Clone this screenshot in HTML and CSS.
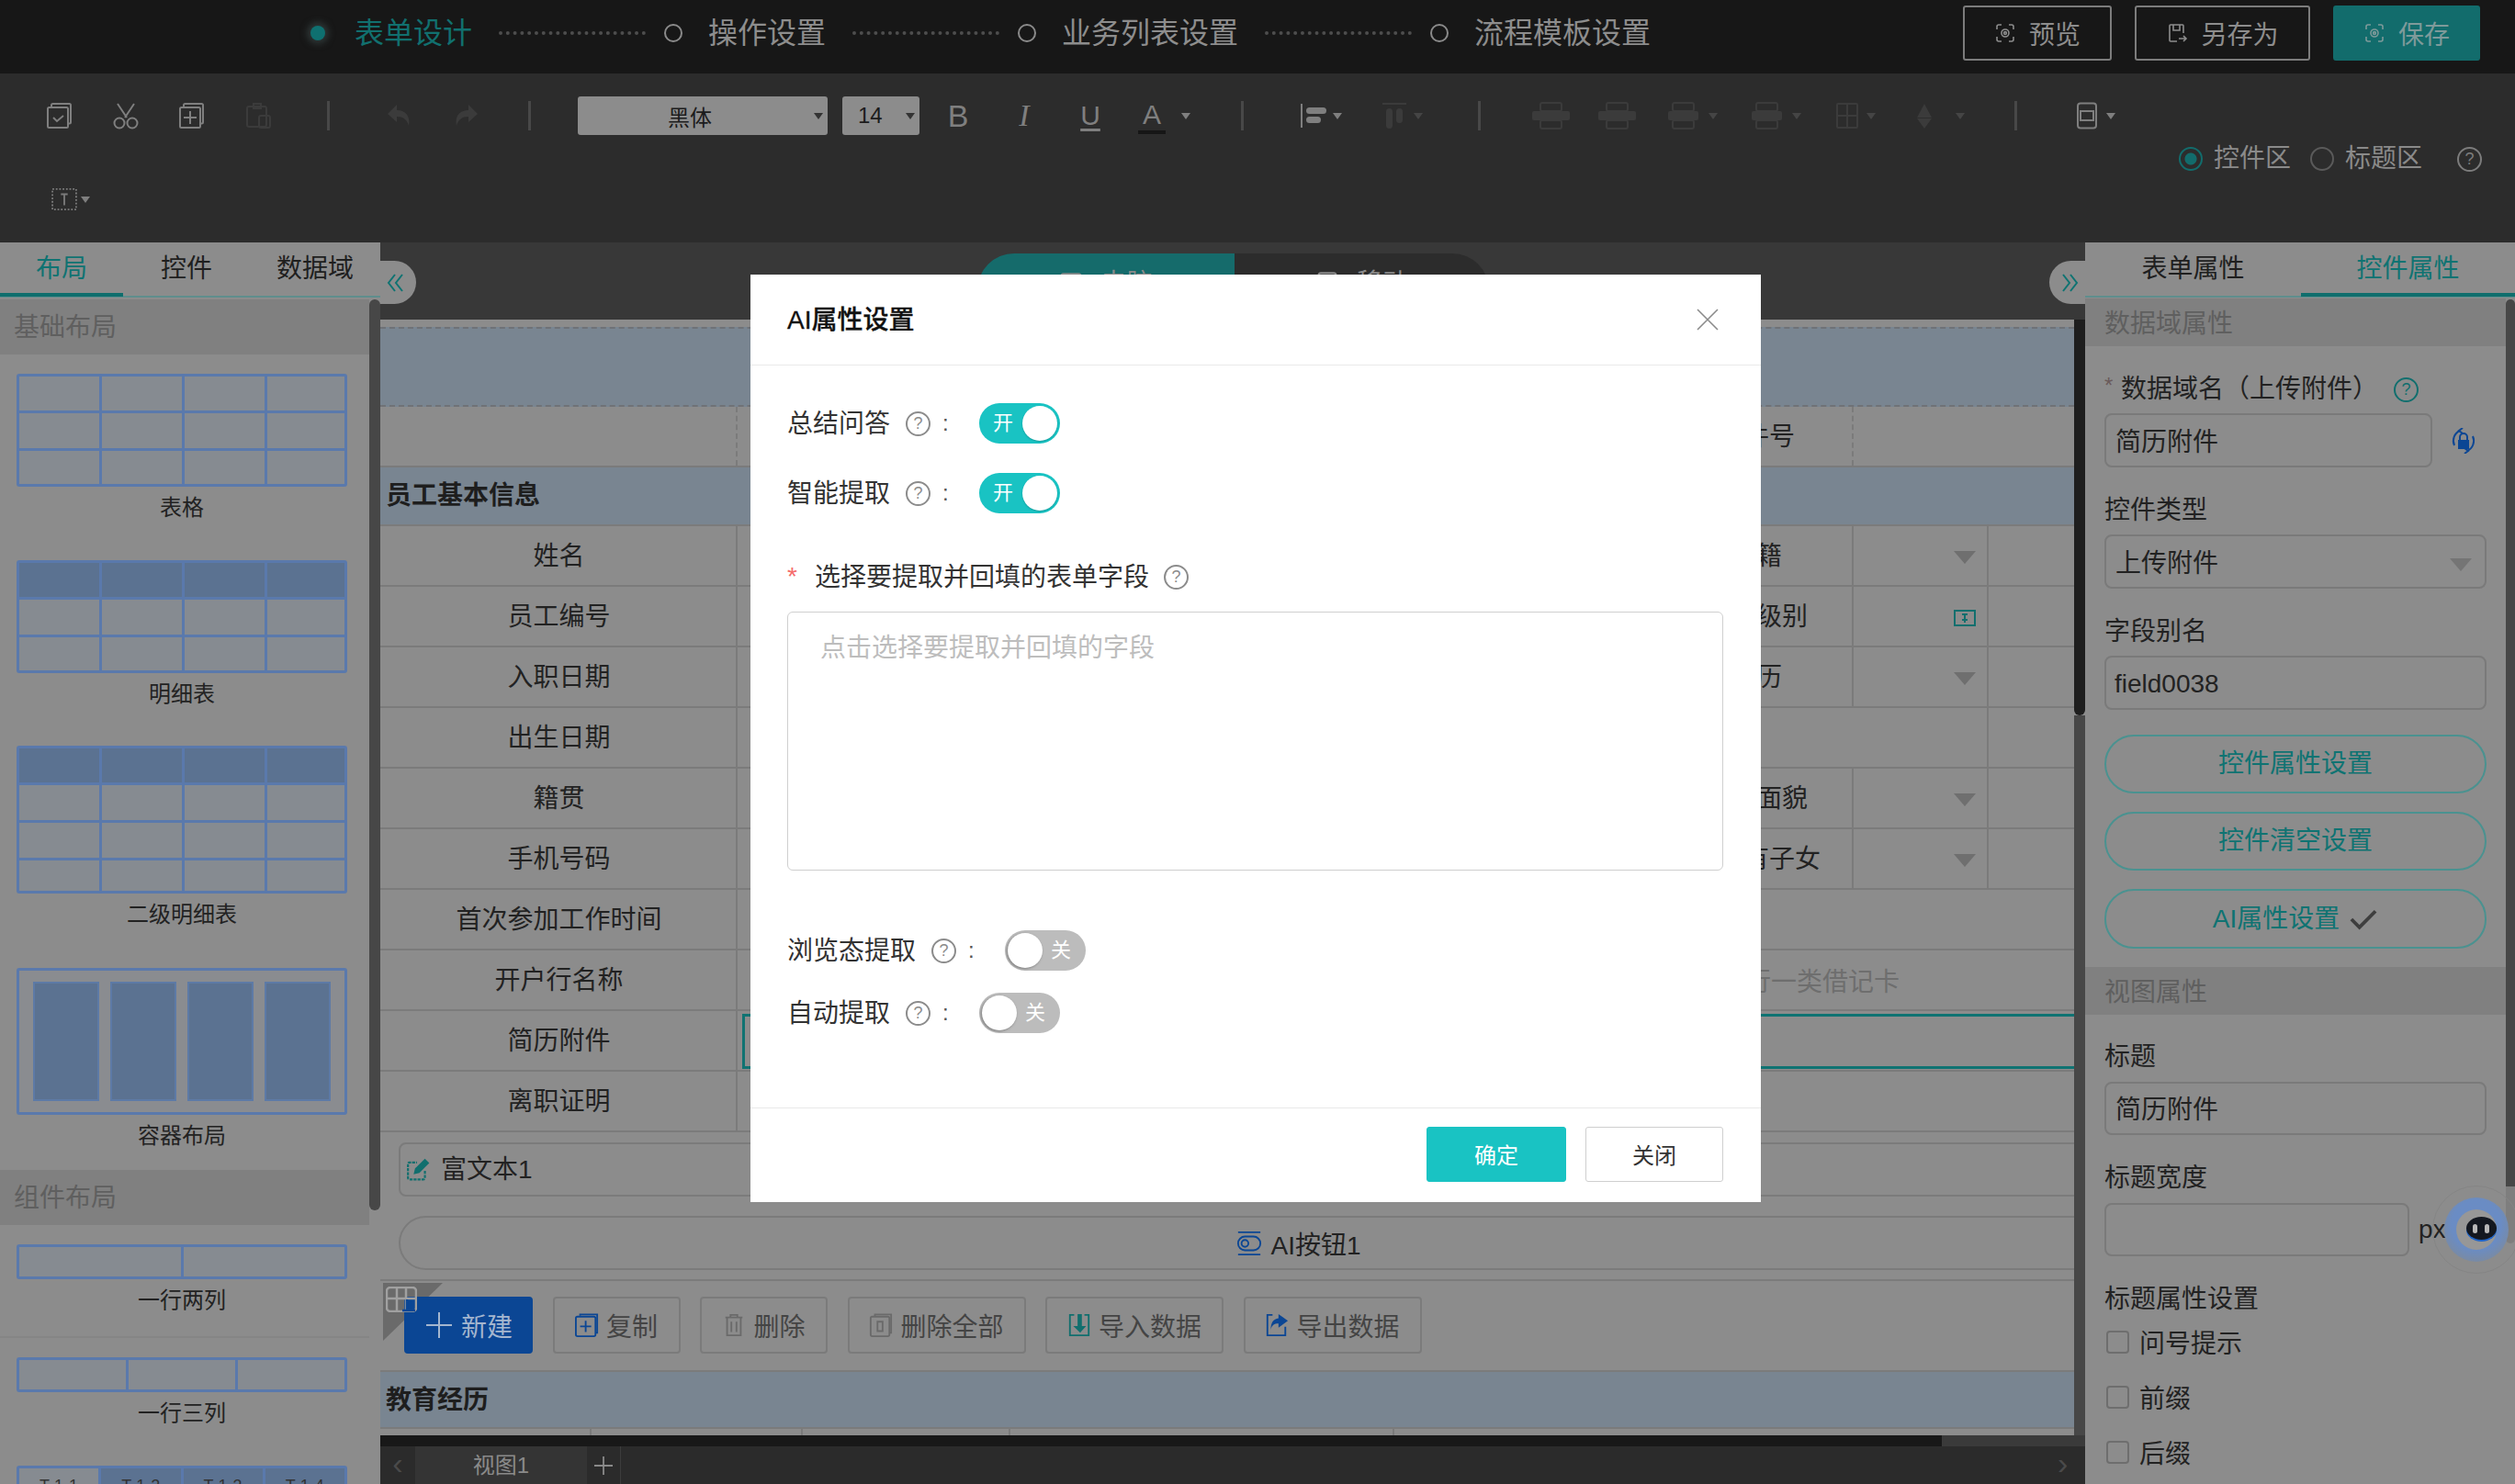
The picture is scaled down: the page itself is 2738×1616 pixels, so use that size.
FILE: index.html
```html
<!DOCTYPE html>
<html lang="zh-CN">
<head>
<meta charset="utf-8">
<title>AI属性设置</title>
<link rel="stylesheet" href="styles.css">
</head>
<body>
<div class="app">
  <header class="topbar">
    <span class="dot-active"></span><span class="step-label active">表单设计</span>
    <span class="connector"></span><span class="ring"></span><span class="step-label">操作设置</span>
    <span class="connector"></span><span class="ring"></span><span class="step-label">业务列表设置</span>
    <span class="connector"></span><span class="ring"></span><span class="step-label">流程模板设置</span>
    <div class="top-actions">
      <button class="top-btn w-preview"><svg class="ti" viewBox="0 0 24 24"><path d="M3 8V5a2 2 0 0 1 2-2h3M21 8V5a2 2 0 0 0-2-2h-3M3 16v3a2 2 0 0 0 2 2h3M21 16v3a2 2 0 0 1-2 2h-3"/><circle cx="12" cy="12" r="4"/><circle cx="12" cy="12" r="1.4"/></svg>预览</button>
      <button class="top-btn w-saveas"><svg class="ti" viewBox="0 0 24 24"><path d="M19 12V4a1 1 0 0 0-1-1H5a1 1 0 0 0-1 1v16a1 1 0 0 0 1 1h7M8 3v6h7V3M14 18h8M19 15l3 3-3 3"/></svg>另存为</button>
      <button class="top-btn save"><svg class="ti" viewBox="0 0 24 24"><path d="M3 8V5a2 2 0 0 1 2-2h3M21 8V5a2 2 0 0 0-2-2h-3M3 16v3a2 2 0 0 0 2 2h3M21 16v3a2 2 0 0 1-2 2h-3"/><circle cx="12" cy="12" r="4"/><circle cx="12" cy="12" r="1.4"/></svg>保存</button>
    </div>
  </header>

  <section class="toolbar">
    <div class="tool-row">
      <svg class="tool first" viewBox="0 0 30 30"><path d="M6 5V3.500A1.500 1.500 0 0 1 7.500 2h18A1.500 1.500 0 0 1 27 3.500V22a1.500 1.500 0 0 1-1.500 1.500H24"/><rect x="2" y="6" width="22" height="22" rx="1.500"/><path d="M8 17l4 4 7-6"/></svg>
      <svg class="tool" viewBox="0 0 30 30"><path d="M6 2l10 15M24 2L14 17"/><circle cx="8" cy="23" r="5.500"/><circle cx="22" cy="23" r="5.500"/></svg>
      <svg class="tool" viewBox="0 0 30 30"><path d="M6 5V3.500A1.500 1.500 0 0 1 7.500 2h18A1.500 1.500 0 0 1 27 3.500V22a1.500 1.500 0 0 1-1.500 1.500H24"/><rect x="2" y="6" width="22" height="22" rx="1.500"/><path d="M13 10v14M6 17h14"/></svg>
      <svg class="tool off" viewBox="0 0 30 30"><rect x="3" y="5" width="21" height="22" rx="2"/><rect x="10" y="2" width="8" height="5"/><rect x="16" y="15" width="12" height="13" rx="2"/></svg>
      <span class="sep"></span>
      <svg class="tool off fill" viewBox="0 0 30 30"><path d="M12 3L2 13l10 9v-6c7 0 11 3 13 10 2-10-3-17-13-17z"/></svg>
      <svg class="tool off fill" viewBox="0 0 30 30"><path d="M18 3l10 10-10 9v-6c-7 0-11 3-13 10C3 16 8 9 18 9z"/></svg>
      <span class="sep s-edit"></span>
      <div class="select font-select">黑体<i class="caret dark"></i></div>
      <div class="select size-select">14<i class="caret dark"></i></div>
      <span class="glyph g-bold">B</span>
      <span class="glyph g-italic">I</span>
      <span class="glyph g-under">U</span>
      <span class="glyph g-color">A</span><i class="caret mid"></i>
      <span class="sep s-text"></span>
      <svg class="tool" viewBox="0 0 30 30"><path d="M2 2v26"/><rect class="solid" x="7" y="6" width="22" height="7" rx="3.500"/><rect class="solid" x="7" y="16" width="16" height="7" rx="3.500"/></svg><i class="caret"></i>
      <svg class="tool off" viewBox="0 0 30 30"><path d="M2 2h26"/><rect class="solid" x="6" y="7" width="7" height="22" rx="3.500"/><rect class="solid" x="17" y="7" width="7" height="16" rx="3.500"/></svg><i class="caret faint"></i>
      <span class="sep"></span>
      <svg class="tool off wide" viewBox="0 0 43 32"><rect x="10" y="2" width="23" height="9" rx="2"/><rect x="10" y="21" width="23" height="9" rx="2"/><rect class="solid" x="1" y="11" width="41" height="10" rx="2"/></svg>
      <svg class="tool off wide" viewBox="0 0 43 32"><rect x="10" y="2" width="23" height="9" rx="2"/><rect x="10" y="21" width="23" height="9" rx="2"/><rect class="solid" x="1" y="11" width="41" height="10" rx="2"/></svg>
      <svg class="tool off wide" viewBox="0 0 43 32"><rect x="10" y="2" width="23" height="9" rx="2"/><rect x="10" y="21" width="23" height="9" rx="2"/><rect class="solid" x="5" y="11" width="33" height="10" rx="2"/></svg><i class="caret faint"></i>
      <svg class="tool off wide t-wide4" viewBox="0 0 43 32"><rect x="10" y="2" width="23" height="9" rx="2"/><rect x="10" y="21" width="23" height="9" rx="2"/><rect class="solid" x="5" y="11" width="33" height="10" rx="2"/></svg><i class="caret faint"></i>
      <svg class="tool off t-grid" viewBox="0 0 30 30"><rect x="4" y="2" width="22" height="26" rx="1"/><path d="M15 2v26M4 15h22"/></svg><i class="caret faint"></i>
      <svg class="tool off fill t-fill" viewBox="0 0 30 30"><path d="M13 2l8 15H5z M5 18h16l-8 11z"/></svg><i class="caret faint far"></i>
      <span class="sep s-last"></span>
      <svg class="tool" viewBox="0 0 30 30"><rect x="5" y="1.500" width="20" height="27" rx="3"/><rect x="8" y="10" width="14" height="10"/></svg><i class="caret"></i>
    </div>
    <div class="mode-row">
      <span class="radio on"></span><span class="mode-label">控件区</span>
      <span class="radio"></span><span class="mode-label">标题区</span>
      <span class="help tool-help">?</span>
    </div>
    <div class="extra-row">
      <svg class="extra-ic" viewBox="0 0 30 26"><rect x="1" y="1" width="28" height="24" stroke-dasharray="2 2"/><path d="M15 6v14M11 7h8"/></svg><i class="caret"></i>
    </div>
  </section>

  <main class="workspace">
    <aside class="left-panel">
      <nav class="tabs left-tabs">
        <span class="tab active">布局</span><span class="tab">控件</span><span class="tab">数据域</span>
      </nav>
      <div class="section-head">基础布局</div>
      <div class="widget"><div class="ic ic-table"></div><div class="widget-label">表格</div></div>
      <div class="widget w2"><div class="ic ic-table head"></div><div class="widget-label">明细表</div></div>
      <div class="widget w3"><div class="ic ic-table head tall"></div><div class="widget-label">二级明细表</div></div>
      <div class="widget w4"><div class="ic ic-box"><i></i><i></i><i></i><i></i></div><div class="widget-label">容器布局</div></div>
      <div class="section-head second">组件布局</div>
      <div class="widget w5"><div class="ic ic-cols"><i></i><i></i></div><div class="widget-label">一行两列</div></div>
      <div class="widget-rule"></div>
      <div class="widget w6"><div class="ic ic-cols"><i></i><i></i><i></i></div><div class="widget-label">一行三列</div></div>
      <div class="widget w7"><div class="ic ic-cols tiny"><i>T-1-1</i><i class="b">T-1-2</i><i class="b">T-1-3</i><i class="b">T-1-4</i></div></div>
      <div class="scroll-thumb left-thumb"></div>
    </aside>

    <div class="center">
      <button class="collapse left-collapse" aria-label="收起"><svg class="chev" viewBox="0 0 18 20"><path d="M9 1L2 10l7 9M17 1l-7 9 7 9"/></svg></button>
      <button class="collapse right-collapse" aria-label="展开"><svg class="chev" viewBox="0 0 18 20"><path d="M1 1l7 9-7 9M9 1l7 9-7 9"/></svg></button>
      <div class="view-switch">
        <div class="view-tab pc"><svg class="vt-ic" viewBox="0 0 24 24"><rect x="3" y="3" width="18" height="18" rx="2"/></svg>电脑</div>
        <div class="view-tab mobile"><svg class="vt-ic" viewBox="0 0 24 24"><rect x="4" y="2" width="16" height="20" rx="2"/></svg>移动</div>
      </div>
      <div class="canvas">
        <div class="form">
          <div class="band"></div>
          <div class="frow dashed"><div class="cl"></div><div class="cv"></div><div class="cl">证件号</div><div class="cv last"></div></div>
          <div class="group">员工基本信息</div>
          <div class="frow"><div class="cl">姓名</div><div class="cv"></div><div class="cl">国籍</div><div class="cv last"><i class="drop"></i></div></div>
          <div class="frow"><div class="cl">员工编号</div><div class="cv"></div><div class="cl">职称级别</div><div class="cv last"><svg class="mini" viewBox="0 0 24 18"><rect x="1" y="1" width="22" height="16"/><path d="M12 4v10M9 5h6M9 11h6"/></svg></div></div>
          <div class="frow"><div class="cl">入职日期</div><div class="cv"></div><div class="cl">学历</div><div class="cv last"><i class="drop"></i></div></div>
          <div class="frow"><div class="cl">出生日期</div><div class="cv"></div><div class="cl blank"></div><div class="cv last"></div></div>
          <div class="frow"><div class="cl">籍贯</div><div class="cv"></div><div class="cl">政治面貌</div><div class="cv last"><i class="drop"></i></div></div>
          <div class="frow"><div class="cl">手机号码</div><div class="cv"></div><div class="cl">是否有子女</div><div class="cv last"><i class="drop"></i></div></div>
          <div class="frow"><div class="cl">首次参加工作时间</div><div class="cv wide"></div></div>
          <div class="frow"><div class="cl">开户行名称</div><div class="cv wide hint">请填写银行一类借记卡</div></div>
          <div class="frow"><div class="cl">简历附件</div><div class="cv wide picked"></div></div>
          <div class="frow"><div class="cl">离职证明</div><div class="cv wide"></div></div>
          <div class="rich"><svg class="rich-ic" viewBox="0 0 24 24"><path d="M19 13v7a1.500 1.500 0 0 1-1.500 1.500h-14A1.500 1.500 0 0 1 2 20V6a1.500 1.500 0 0 1 1.500-1.500H11" stroke-dasharray="3 1"/><path class="pen" d="M9 15l1-4L19 2l3 3-9 9z"/></svg>富文本1</div>
          <div class="ai-btn"><svg class="ai-ic" viewBox="0 0 30 30"><path d="M2 2h26M2 28h26"/><rect x="2" y="7" width="26" height="16" rx="8"/><circle cx="10" cy="15" r="4"/></svg>AI按钮1</div>
          <div class="actions">
            <span class="corner"></span>
            <svg class="corner-ic" viewBox="0 0 34 28"><rect x="1" y="1" width="32" height="26" rx="4"/><path d="M12 1v26M22 1v26M1 13h32"/><path class="cb" d="M23 14v12M18 26h14"/></svg>
            <button class="act primary"><svg class="act-ic" viewBox="0 0 28 28"><path d="M14 0v28M0 14h28"/></svg>新建</button>
            <button class="act a-copy"><svg class="act-ic blue" viewBox="0 0 28 28"><path d="M6 3V1.500h20V23h-2"/><rect x="1" y="4" width="23" height="23" rx="2"/><path d="M12.500 9v13M6 15.500h13"/></svg>复制</button>
            <button class="act a-del"><svg class="act-ic gray" viewBox="0 0 28 28"><path d="M4 5h20M10 5V2h8v3M6 5v21h16V5M11 10v12M17 10v12"/></svg>删除</button>
            <button class="act a-wide"><svg class="act-ic gray" viewBox="0 0 28 28"><path d="M7 4V1.500h19V23h-2"/><rect x="2" y="4" width="22" height="23" rx="2"/><path d="M9 10h8M10 10v11h6V10"/></svg>删除全部</button>
            <button class="act a-wide"><svg class="act-ic teal" viewBox="0 0 28 28"><path d="M8 2H3v24h22V2h-5"/><path class="fl" d="M12 1h5v14h5l-7 8-8-8h5z"/></svg>导入数据</button>
            <button class="act a-wide"><svg class="act-ic blue" viewBox="0 0 28 28"><path d="M9 2H3v24h21V16"/><path class="fl" d="M16 1l11 8-11 8v-5c-5 0-8 2-9 7 0-8 3-12 9-13z"/></svg>导出数据</button>
          </div>
          <div class="group edu">教育经历</div>
          <div class="edu-cols"><i></i><i></i><i></i><i></i></div>
        </div>
        <div class="vscroll"></div>
        <div class="hscroll"></div>
      </div>
      <footer class="sheet-bar">
        <span class="sheet-prev">‹</span>
        <span class="sheet-tab">视图1</span>
        <span class="sheet-add"><svg class="plus" viewBox="0 0 22 22"><path d="M11 0v22M0 11h22"/></svg></span>
        <span class="sheet-next">›</span>
      </footer>
    </div>

    <aside class="right-panel">
      <nav class="tabs right-tabs">
        <span class="tab">表单属性</span><span class="tab active">控件属性</span>
      </nav>
      <div class="section-head small">数据域属性</div>
      <div class="prop-body">
        <div class="prop-label first"><span class="req">*</span>数据域名（上传附件）<span class="help teal-help">?</span></div>
        <div class="input-line">
          <div class="input short">简历附件</div>
          <svg class="lock" viewBox="0 0 28 28"><path d="M4 19A12 12 0 0 1 10 3M24 9a12 12 0 0 1-6 16"/><path class="lk" d="M8 13h12v10H8z"/><path d="M10 13v-3a4 4 0 0 1 8 0v3M13 0l-4 3 4 3M15 22l4 3-4 3"/></svg>
        </div>
        <div class="prop-label">控件类型</div>
        <div class="input">上传附件<i class="drop light"></i></div>
        <div class="prop-label">字段别名</div>
        <div class="input latin">field0038</div>
        <button class="pill p1">控件属性设置</button>
        <button class="pill p2">控件清空设置</button>
        <button class="pill p3">AI属性设置<svg class="tick" viewBox="0 0 28 22"><path d="M2 11l8 8L26 3"/></svg></button>
      </div>
      <div class="section-head small view">视图属性</div>
      <div class="prop-body">
        <div class="prop-label second">标题</div>
        <div class="input tight">简历附件</div>
        <div class="prop-label">标题宽度</div>
        <div class="input-line tight"><div class="input narrow"></div><span class="unit">px</span></div>
        <div class="prop-label">标题属性设置</div>
        <label class="check first-check"><i></i>问号提示</label>
        <label class="check"><i></i>前缀</label>
        <label class="check"><i></i>后缀</label>
      </div>
      <div class="scroll-thumb right-thumb"></div>
      <div class="scroll-thumb right-thumb-low"></div>
    </aside>
  </main>

  <div class="robot"><div class="robot-ring"><div class="robot-core"><div class="robot-head"><i></i><i></i></div></div></div></div>

  <div class="modal" role="dialog">
    <div class="modal-head">
      <span class="modal-title">AI属性设置</span>
      <svg class="close" viewBox="0 0 24 24"><path d="M1 1l22 22M23 1L1 23"/></svg>
    </div>
    <div class="modal-body">
      <div class="m-row r1"><span class="m-label">总结问答</span><span class="help">?</span><span class="colon">:</span><span class="switch on">开<i></i></span></div>
      <div class="m-row r2"><span class="m-label">智能提取</span><span class="help">?</span><span class="colon">:</span><span class="switch on">开<i></i></span></div>
      <div class="m-row r3"><span class="star">*</span><span class="m-label">选择要提取并回填的表单字段</span><span class="help">?</span></div>
      <div class="m-area">点击选择要提取并回填的字段</div>
      <div class="m-row r4"><span class="m-label">浏览态提取</span><span class="help">?</span><span class="colon">:</span><span class="switch"><i></i>关</span></div>
      <div class="m-row r5"><span class="m-label">自动提取</span><span class="help">?</span><span class="colon">:</span><span class="switch"><i></i>关</span></div>
    </div>
    <div class="modal-foot">
      <button class="m-btn ok">确定</button>
      <button class="m-btn">关闭</button>
    </div>
  </div>
</div>
</body>
</html>
```

FILE: styles.css
```css
* { box-sizing: border-box; }
html, body { margin: 0; padding: 0; }
body {
  width: 2738px; height: 1616px; overflow: hidden; background: #2c2c2c; color: #222;
  font-family: "Liberation Sans", "Noto Sans CJK SC", sans-serif; font-size: 28px;
}
button { font: inherit; padding: 0; background: none; border: 0; color: inherit; }
i { font-style: normal; display: block; }
svg { fill: none; stroke: currentColor; stroke-width: 2; flex: none; display: block; }
.app { position: relative; width: 2738px; height: 1616px; display: flex; flex-direction: column; overflow: hidden; }

/* top bar */
.topbar { height: 80px; flex: none; background: #171717; display: flex; align-items: center; padding: 0 38px 8px 338px; color: #8a8a8a; }
.dot-active { width: 16px; height: 16px; border-radius: 50%; background: #0f7070; box-shadow: 0 0 7px 4px #2d3535; margin-right: 32px; }
.step-label { font-size: 32px; line-height: 44px; color: #8d8d8d; }
.step-label.active { color: #11706f; }
.connector { width: 160px; margin: 0 20px 0 29px; border-top: 4px dotted #4d4d4d; }
.ring { width: 20px; height: 20px; border-radius: 50%; border: 2px solid #8a8a8a; margin-right: 28px; }
.top-actions { margin-left: auto; display: flex; align-items: center; gap: 25px; height: 60px; }
.top-btn { height: 60px; border: 2px solid #7c7c7c; border-radius: 3px; display: flex; align-items: center; justify-content: center; gap: 14px; color: #8d8d8d; font-size: 28px; }
.w-preview { width: 162px; }
.w-saveas { width: 191px; }
.top-btn.save { width: 160px; background: #126c6c; border-color: #126c6c; color: #7e9a9a; }
.ti { width: 24px; height: 24px; stroke-width: 1.6; }

/* toolbar */
.toolbar { height: 184px; flex: none; background: #2c2c2c; padding-top: 25px; color: #808080; }
.tool-row { height: 42px; display: flex; align-items: center; padding-left: 50px; }
.tool { width: 30px; height: 30px; margin-left: 42px; color: #7f7f7f; }
.tool.first { margin-left: 0; }
.tool.off { color: #3b3b3b; }
.tool.fill, .tool.fill path { fill: #3b3b3b; stroke: none; }
.tool.wide { width: 43px; height: 32px; margin-left: 29px; }
.tool.wide.t-wide4 { margin-left: 32px; }
.solid { fill: currentColor; stroke: none; }
.sep { width: 3px; height: 32px; background: #484848; margin-left: 60px; flex: none; }
.sep + .tool { margin-left: 61px; }
.sep + .tool.wide { margin-left: 55px; }
.s-edit { margin-left: 53px; }
.s-text { margin-left: 55px; }
.s-last { margin-left: 54px; }
.tool.t-grid { margin-left: 35px; }
.tool.t-fill { margin-left: 40px; }
.select { height: 42px; background: #8c8c8c; border-radius: 3px; color: #1c1c1c; display: flex; align-items: center; justify-content: center; font-size: 24px; position: relative; }
.font-select { width: 272px; margin-left: 51px; padding-right: 28px; }
.size-select { width: 84px; margin-left: 16px; justify-content: flex-start; padding-left: 17px; }
.caret { width: 0; height: 0; border: 5px solid transparent; border-top: 7px solid #7f7f7f; border-bottom: 0; margin-left: 6px; flex: none; }
.caret.dark { border-top-color: #333; position: absolute; right: 5px; top: 18px; margin: 0; }
.caret.mid { margin-left: 17px; }
.caret.far { margin-left: 17px; }
.caret.faint { border-top-color: #454545; }
.glyph { width: 30px; margin-left: 42px; text-align: center; font-size: 34px; line-height: 42px; color: #7f7f7f; }
.g-bold { margin-left: 27px; }
.g-italic { font-family: "Liberation Serif", serif; font-style: italic; }
.g-under { text-decoration: underline; text-underline-offset: 4px; font-size: 30px; }
.g-color { margin-left: 37px; border-bottom: 4px solid #161616; line-height: 34px; height: 38px; margin-top: 2px; font-size: 30px; }
.mode-row { height: 30px; margin-top: 11px; display: flex; align-items: center; padding-left: 2372px; color: #8a8a8a; }
.radio { width: 26px; height: 26px; border-radius: 50%; border: 2px solid #5a5a5a; background: #2c2c2c; flex: none; }
.radio.on { border-color: #126c6c; background: radial-gradient(circle, #126c6c 0 6px, transparent 7px); }
.mode-label { width: 84px; margin: 0 21px 0 12px; font-size: 28px; line-height: 30px; white-space: nowrap; color: #8a8a8a; }
.tool-help { margin-left: 21px; border-color: #7c7c7c !important; color: #7c7c7c !important; }
.extra-row { height: 40px; margin-top: 9px; padding-left: 56px; display: flex; align-items: center; }
.extra-ic { width: 28px; height: 24px; color: #7a7a7a; }
.extra-row .caret { margin-left: 4px; }

/* workspace */
.workspace { flex: 1; display: flex; min-height: 0; }
.left-panel, .right-panel { background: #8c8c8c; flex: none; height: 100%; position: relative; overflow: hidden; }
.left-panel { width: 414px; }
.right-panel { width: 468px; }
.tabs { height: 60px; display: flex; border-bottom: 2px solid #5f8e8d; }
.tab { position: relative; text-align: center; font-size: 28px; line-height: 57px; height: 58px; color: #1f1f1f; }
.tab.active { color: #0f7372; }
.tab.active::after { content: ""; position: absolute; left: 0; right: 0; bottom: -1px; height: 4px; background: #0f6e6d; }
.left-tabs .tab { width: 134px; }
.left-tabs .tab:nth-child(2) { width: 138px; }
.left-tabs .tab:nth-child(3) { width: 142px; }
.right-tabs .tab { width: 233px; }
.right-tabs .tab:first-child { width: 235px; }
.section-head { height: 60px; width: 402px; margin-top: 2px; background: #808080; color: #5f5f5f; font-size: 28px; line-height: 62px; padding-left: 15px; }
.section-head.second { margin-top: 20px; }
.widget { padding: 21px 0 0 18px; width: 396px; }
.w2 { padding-top: 40px; }
.w3 { padding-top: 39px; }
.w4 { padding-top: 41px; }
.w5 { padding-top: 21px; }
.w6 { padding-top: 21px; }
.w7 { padding-top: 40px; }
.widget-rule { height: 2px; width: 402px; margin-top: 22px; background: #858585; }
.widget-label { width: 360px; text-align: center; font-size: 24px; line-height: 34px; margin-top: 6px; color: #222; }
.ic { width: 360px; border: 3px solid #5a79ac; border-radius: 3px; background-color: #868b91; }
.ic-table {
  height: 123px;
  background-image: linear-gradient(#5a79ac 3px, transparent 3px), linear-gradient(90deg, #5a79ac 3px, transparent 3px);
  background-size: 100% 41px, 90px 100%;
  background-position: 0 37px, 87px 0;
}
.ic-table.head {
  background-image: linear-gradient(#5a79ac 3px, transparent 3px), linear-gradient(90deg, #5a79ac 3px, transparent 3px), linear-gradient(#5b7291, #5b7291);
  background-size: 100% 41px, 90px 100%, 100% 38px;
  background-position: 0 37px, 87px 0, 0 0;
  background-repeat: repeat, repeat, no-repeat;
}
.ic-table.tall { height: 161px; }
.ic-box { height: 160px; display: flex; gap: 12px; padding: 12px 15px; background: #8a8c90; }
.ic-box i { flex: 1; background: #5b7291; border: 2px solid #5d7aa6; }
.ic-cols { height: 38px; display: flex; }
.ic-cols i { flex: 1; border-left: 3px solid #5a79ac; }
.ic-cols i:first-child { border-left: 0; }
.tiny i { height: 34px; font-size: 18px; text-align: center; line-height: 38px; color: #333; }
.tiny .b { background: #5b7291; }
.scroll-thumb { position: absolute; background: #474747; }
.left-thumb { left: 402px; top: 62px; width: 12px; height: 992px; border-radius: 6px; }
.right-thumb { left: 458px; top: 62px; width: 10px; height: 966px; border-radius: 5px 5px 0 0; background: #474747; }
.right-thumb-low { left: 458px; top: 1028px; width: 10px; height: 62px; background: #7e7e7e; border-radius: 0 0 5px 5px; }

/* centre */
.center { flex: 1; min-width: 0; position: relative; display: flex; flex-direction: column; background: #383838; }
.collapse { position: absolute; top: 20px; width: 39px; height: 47px; background: #8c8c8c; color: #0f7372; display: flex; align-items: center; z-index: 2; }
.left-collapse { left: 0; border-radius: 0 24px 24px 0; padding-left: 7px; }
.right-collapse { right: 0; border-radius: 24px 0 0 24px; justify-content: flex-end; padding-right: 7px; }
.chev { width: 18px; height: 20px; }
.view-switch { height: 84px; flex: none; display: flex; justify-content: center; padding-top: 12px; }
.view-tab { height: 66px; display: flex; align-items: center; justify-content: center; gap: 18px; font-size: 28px; line-height: 34px; color: #8a8a8a; }
.view-tab.pc { width: 280px; background: #156b6b; border-radius: 40px 0 0 0; }
.view-tab.mobile { width: 277px; background: #2c2c2c; border-radius: 0 40px 0 0; }
.vt-ic { width: 28px; height: 28px; }
.canvas { flex: 1; min-height: 0; position: relative; overflow: hidden; background: #8c8c8c; }
.form { width: 1844px; }
.band { height: 87px; margin-top: 8px; background: #798591; border-top: 2px dashed #6f7277; border-bottom: 2px dashed #6f7277; }
.frow { height: 66px; display: grid; grid-template-columns: 389px 1003px 212px 147px 93px; border-bottom: 2px solid #7b7b7b; }
.cl { border-right: 2px solid #7b7b7b; text-align: center; font-size: 28px; line-height: 66px; height: 64px; padding-left: 2px; color: #222; white-space: nowrap; }
.cl.blank { border-right: 0; }
.cv { display: flex; align-items: center; justify-content: flex-end; padding-right: 12px; }
.cv.last { border-right: 2px solid #7b7b7b; padding-right: 0; }
.cv.wide { grid-column: 2 / -1; justify-content: flex-start; }
.dashed .cl { border-right: 2px dashed #7b7b7b; }
.dashed .cv.last { border-right: 0; }
.hint { color: #6e6e6e; font-size: 28px; padding-left: 985px; white-space: nowrap; }
.picked { border-top: 3px solid #0f7372; border-bottom: 3px solid #0f7372; border-left: 3px solid #0f7372; height: 60px; margin: 3px 0 0 5px; }
.drop { width: 0; height: 0; border: 12px solid transparent; border-top: 14px solid #6f6f6f; border-bottom: 0; margin: 4px 12px 0 0; }
.drop.light { position: absolute; right: 14px; top: 24px; margin: 0; border-top-color: #757575; }
.mini { width: 24px; height: 20px; color: #116f6e; margin: 4px 12px 0 0; }
.group { height: 64px; background: #798591; border-bottom: 2px solid #7b7b7b; font-weight: 700; line-height: 62px; padding-left: 6px; color: #1e1e1e; font-size: 28px; }
.rich { width: 1960px; height: 59px; margin: 11px 0 0 20px; border: 2px solid #7b7b7b; border-radius: 8px; display: flex; align-items: center; padding-left: 6px; gap: 12px; line-height: 55px; }
.rich-ic { width: 26px; height: 26px; color: #116f6e; }
.pen { fill: #116f6e; }
.ai-btn { width: 1960px; height: 59px; margin: 21px 0 0 20px; border: 2px solid #7b7b7b; border-radius: 30px; display: flex; align-items: center; justify-content: center; gap: 9px; }
.ai-ic { width: 28px; height: 28px; color: #0b4694; }
.actions { position: relative; height: 99px; margin-top: 10px; border-top: 2px solid #7b7b7b; display: flex; align-items: flex-start; padding: 17px 0 0 26px; gap: 21.500px; }
.corner { position: absolute; left: 3px; top: 2px; width: 0; height: 0; border-top: 63px solid #6a6a6a; border-right: 65px solid transparent; }
.corner-ic { position: absolute; left: 6px; top: 6px; width: 34px; height: 28px; color: #a0a0a0; z-index: 2; stroke-width: 2.500; }
.corner-ic .cb { stroke: #0b4694; }
.act { height: 62px; border: 2px solid #7b7b7b; border-radius: 4px; display: flex; align-items: center; justify-content: center; gap: 8px; color: #444; white-space: nowrap; }
.a-copy, .a-del { width: 139px; }
.a-wide { width: 194px; }
.act.primary { width: 140px; background: #0b4694; border-color: #0b4694; color: #a4b6cf; justify-content: flex-start; padding: 0 0 0 22px; gap: 10px; z-index: 1; }
.act-ic { width: 26px; height: 26px; color: #6a6a6a; }
.act-ic.blue { color: #0b4694; }
.act-ic.teal { color: #116f6e; }
.fl { fill: currentColor; stroke: none; }
.act.primary .act-ic { color: #a4b6cf; width: 28px; height: 28px; }
.group.edu { border-top: 2px solid #7b7b7b; }
.edu-cols { height: 20px; display: grid; grid-template-columns: 230px 230px 226px 418px 1fr; }
.edu-cols i { border-right: 2px solid #7b7b7b; }
.vscroll { position: absolute; right: 0; top: 0; width: 12px; height: 431px; background: #1e1e1e; border-radius: 0 0 6px 6px; z-index: 1; }
.canvas::after { content: ""; position: absolute; right: 0; top: 431px; bottom: 12px; width: 12px; background: #474747; z-index: 0; }
.hscroll { position: absolute; left: 0; bottom: 0; right: 0; height: 12px; background: linear-gradient(90deg, #181818 0, #181818 1700px, #3a3a3a 1700px); z-index: 1; }
.sheet-bar { height: 41px; flex: none; background: #2b2b2b; display: flex; color: #8a8a8a; font-size: 24px; line-height: 41px; }
.sheet-prev { width: 38px; text-align: center; color: #4a4a4a; font-size: 34px; line-height: 36px; }
.sheet-tab { width: 187px; background: #343434; text-align: center; }
.sheet-add { width: 37px; border-right: 1px solid #3c3c3c; display: flex; align-items: center; justify-content: center; }
.plus { width: 20px; height: 20px; color: #8a8a8a; }
.sheet-next { margin-left: auto; width: 30px; color: #4a4a4a; font-size: 34px; line-height: 36px; }

/* right panel */
.section-head.small { width: 458px; height: 52px; line-height: 56px; padding-left: 21px; margin: 1px 0 0; }
.section-head.view { margin-top: 20px; }
.prop-body { padding: 0 31px 0 21px; }
.prop-label { height: 40px; line-height: 44px; margin-top: 27px; font-size: 28px; color: #222; display: flex; align-items: center; white-space: nowrap; }
.prop-label.second { margin-top: 26px; }
.req { color: #6a5a5a; font-size: 24px; width: 18px; line-height: 24px; margin-top: -8px; }
.teal-help { margin-left: 16px; border-color: #116f6e !important; color: #116f6e !important; }
.input-line { display: flex; align-items: center; margin-top: 6px; }
.input { position: relative; height: 59px; margin-top: 6px; border: 2px solid #7a7a7a; border-radius: 8px; padding-left: 10px; line-height: 60px; font-size: 28px; color: #222; }
.input.tight { margin-top: 7px; height: 58px; line-height: 58px; }
.input-line .input { margin-top: 0; }
.input-line.tight { margin-top: 7px; }
.short { width: 357px; }
.narrow { width: 332px; height: 58px; }
.latin { font-size: 28px; padding-left: 9px; line-height: 58px; }
.lock { width: 28px; height: 28px; margin-left: 20px; color: #0b4694; }
.lk { fill: #0b4694; stroke: none; }
.unit { margin-left: 10px; font-size: 28px; }
.pill { display: block; width: 100%; height: 64px; border: 2px solid #4a9290; border-radius: 32px; color: #0f7372; font-size: 28px; line-height: 60px; }
.p1 { margin-top: 27px; }
.p2 { margin-top: 20px; }
.p3 { margin-top: 20px; height: 65px; display: flex; align-items: center; justify-content: center; gap: 10px; }
.tick { width: 32px; height: 24px; color: #3e3e3e; stroke-width: 3.500; }
.check { display: flex; align-items: center; height: 60px; gap: 11px; color: #222; font-size: 28px; }
.first-check { margin-top: -4px; }
.check i { width: 25px; height: 25px; margin-left: 2px; border: 2px solid #6e6e6e; border-radius: 4px; }

/* robot */
.robot { position: absolute; left: 2648px; top: 1291px; width: 96px; height: 96px; border-radius: 50%; border: 1px solid #858585; display: flex; align-items: center; justify-content: center; z-index: 3; }
.robot-ring { width: 70px; height: 70px; border-radius: 50%; background: radial-gradient(circle at 50% 42%, #6a8cc4 50%, #7f8a98 85%, #8c8c8c 100%); display: flex; align-items: center; justify-content: center; }
.robot-core { width: 44px; height: 44px; border-radius: 50%; background: #979797; display: flex; align-items: center; justify-content: center; }
.robot-head { flex: none; width: 33px; height: 25px; margin: -3px 0 0 10px; border-radius: 50%; background: #141820; box-shadow: 0 2px 0 #1f64c8; display: flex; align-items: center; justify-content: center; gap: 8px; }
.robot-head i { width: 5px; height: 10px; border-radius: 3px; background: #b8b8b8; }

/* modal */
.modal { position: absolute; left: 817px; top: 299px; width: 1100px; height: 1010px; background: #fff; display: flex; flex-direction: column; z-index: 5; color: #333; }
.modal-head { height: 99px; flex: none; border-bottom: 1px solid #e9e9e9; display: flex; align-items: center; justify-content: space-between; padding: 0 46px 0 40px; }
.modal-title { font-size: 28px; font-weight: 500; color: #111; line-height: 42px; padding-top: 2px; -webkit-text-stroke: 0.3px #111; }
.close { width: 24px; height: 24px; color: #8b8b8b; stroke-width: 1.600; }
.modal-body { flex: 1; padding: 41px 41px 0 40px; }
.m-row { display: flex; align-items: center; height: 44px; }
.r2 { margin-top: 32px; }
.r3 { margin-top: 49px; height: 40px; }
.r4 { margin-top: 65px; }
.r5 { margin-top: 24px; }
.m-label { font-size: 28px; line-height: 42px; padding-top: 2px; color: #333; white-space: nowrap; }
.help { width: 27px; height: 27px; border: 2px solid #8c8c8c; border-radius: 50%; color: #8c8c8c; font-size: 18px; line-height: 23px; text-align: center; flex: none; display: inline-block; margin-left: 17px; }
.colon { width: 6px; margin-left: 13px; font-size: 24px; line-height: 36px; color: #555; margin-right: 34px; }
.switch { position: relative; width: 88px; height: 44px; border-radius: 22px; background: #bcbcbc; color: #fff; font-size: 22px; line-height: 44px; display: flex; justify-content: space-between; align-items: center; padding: 0 16px 0 3px; flex: none; }
.switch i { width: 38px; height: 38px; border-radius: 50%; background: #fff; box-shadow: -1px 1px 3px rgba(0,0,0,.35); }
.switch.on { background: #19c3c3; padding: 0 3px 0 15px; }
.switch.on i { box-shadow: 0 1px 2px rgba(0,0,0,.2); }
.star { width: 30px; color: #f56c6c; font-size: 28px; line-height: 30px; }
.r3 .help { margin-left: 16px; }
.m-area { height: 282px; margin-top: 18px; border: 1px solid #cfcfcf; border-radius: 6px; padding: 20px 35px; font-size: 28px; line-height: 38px; color: #bdbdbd; }
.modal-foot { height: 103px; flex: none; border-top: 1px solid #e9e9e9; display: flex; justify-content: flex-end; gap: 21px; padding: 20px 41px 0 0; }
.m-btn { width: 150px; height: 60px; border: 1px solid #cfcfcf; border-radius: 3px; font-size: 24px; padding-bottom: 2px; color: #333; background: #fff; }
.m-btn.ok { width: 152px; background: #19c3c3; border-color: #19c3c3; color: #fff; }
```
